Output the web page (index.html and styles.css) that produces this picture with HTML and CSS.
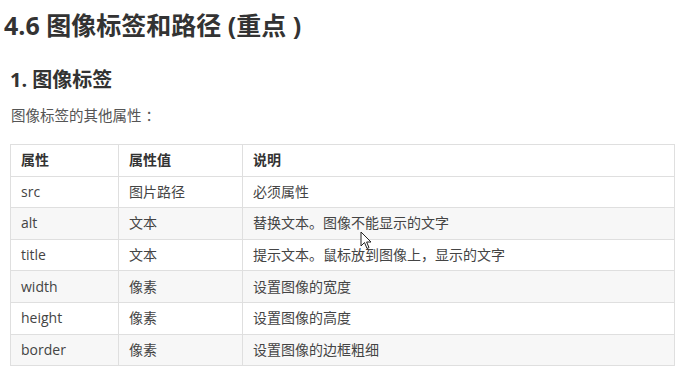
FILE: index.html
```html
<!DOCTYPE html>
<html lang="zh-CN">
<head>
<meta charset="utf-8">
<title>4.6 图像标签和路径</title>
<link rel="stylesheet" href="styles.css">
</head>
<body>
<div class="page">
  <h1 class="title">4.6 图像标签和路径 (重点 )</h1>
  <h2 class="subtitle">1. 图像标签</h2>
  <p class="desc">图像标签的其他属性<span class="punct">：</span></p>
  <table class="attrs">
    <colgroup>
      <col class="c1">
      <col class="c2">
      <col class="c3">
    </colgroup>
    <thead>
      <tr><th>属性</th><th>属性值</th><th>说明</th></tr>
    </thead>
    <tbody>
      <tr><td>src</td><td>图片路径</td><td>必须属性</td></tr>
      <tr><td>alt</td><td>文本</td><td>替换文本。图像不能显示的文字</td></tr>
      <tr><td>title</td><td>文本</td><td>提示文本。鼠标放到图像上，显示的文字</td></tr>
      <tr><td>width</td><td>像素</td><td>设置图像的宽度</td></tr>
      <tr><td>height</td><td>像素</td><td>设置图像的高度</td></tr>
      <tr><td>border</td><td>像素</td><td>设置图像的边框粗细</td></tr>
    </tbody>
  </table>
  <svg class="cursor" width="12" height="19" viewBox="0 0 12 19" aria-hidden="true">
    <path d="M1 1 L1 15 L4.5 11.5 L7 17.5 L9 16.6 L6.6 11 L11 11 Z" fill="#fff" stroke="#222" stroke-width="1" stroke-linejoin="round"/>
  </svg>
</div>
</body>
</html>
```

FILE: styles.css
```css
html, body {
  margin: 0;
  padding: 0;
  background: #ffffff;
}

.page {
  position: relative;
  padding: 0 0 0 4px;
  font-family: "Open Sans", "Noto Sans CJK SC", sans-serif;
  color: #333333;
}

.title {
  margin: 0;
  padding-top: 6px;
  font-size: 25px;
  line-height: 38px;
  font-weight: 700;
  color: #333333;
}

.subtitle {
  margin: 22px 0 0 6px;
  font-size: 20px;
  line-height: 28px;
  font-weight: 700;
  color: #333333;
}

.desc {
  margin: 11px 0 0 7px;
  font-size: 14.5px;
  line-height: 22px;
  color: #555555;
}

.punct {
  padding-left: 4px;
}

.attrs {
  margin: 17px 0 0 6px;
  border-collapse: collapse;
  width: 665px;
  font-size: 14px;
  color: #444444;
}

.c1 { width: 108px; }
.c2 { width: 124px; }

.attrs th,
.attrs td {
  border: 1px solid #dfdfdf;
  padding: 0 10px;
  height: 30.6px;
  text-align: left;
  line-height: 20px;
}

.attrs th {
  font-weight: 700;
  color: #333333;
}

.attrs tbody tr:nth-child(2n) {
  background: #f7f7f7;
}

.cursor {
  position: absolute;
  left: 360px;
  top: 231px;
}
```
